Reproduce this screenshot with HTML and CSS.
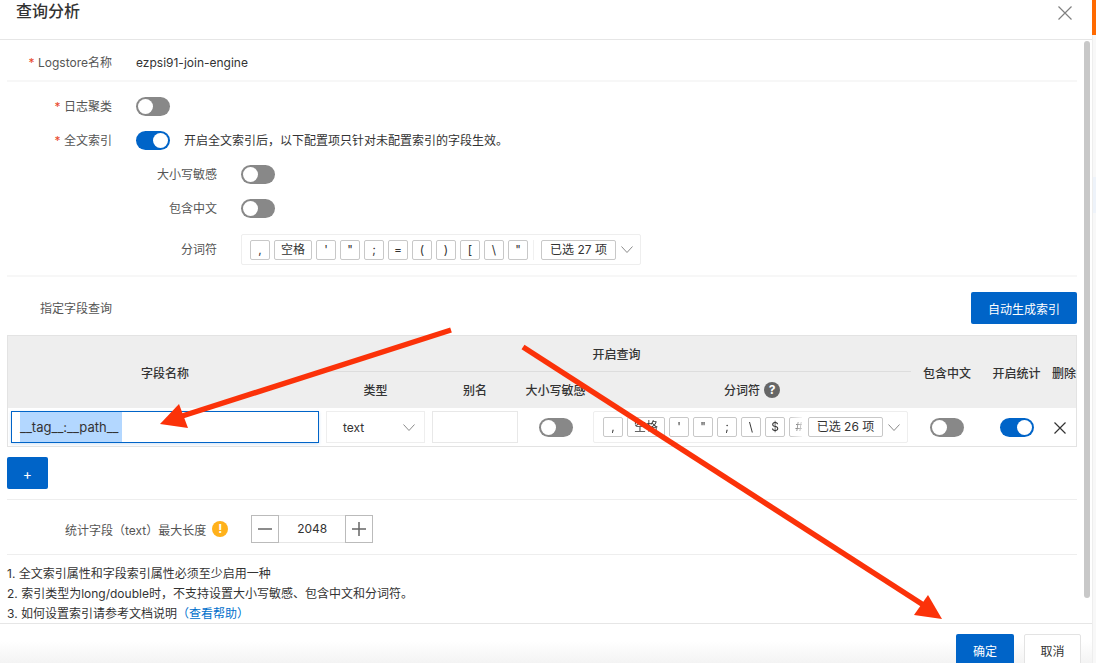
FILE: index.html
```html
<!DOCTYPE html>
<html lang="zh-CN">
<head>
    <meta charset="UTF-8">
    <title>查询分析</title>
    <link rel="stylesheet" href="styles.css">
</head>
<body>
    <div class="dialog">
        <div class="dialog-header">
            <h2>查询分析</h2>
            <svg class="close-icon" width="16" height="16" viewBox="0 0 16 16"><path d="M1.5 1.5l13 13M14.5 1.5l-13 13"/></svg>
        </div>

        <div class="dialog-body">
            <div class="form-row logstore-row">
                <label class="form-label"><span class="req">*</span> Logstore名称</label>
                <span class="form-value">ezpsi91-join-engine</span>
            </div>

            <div class="index-section">
                <div class="form-row">
                    <label class="form-label"><span class="req">*</span> 日志聚类</label>
                    <span class="switch"></span>
                </div>
                <div class="form-row">
                    <label class="form-label"><span class="req">*</span> 全文索引</label>
                    <span class="switch on"></span>
                    <span class="hint">开启全文索引后，以下配置项只针对未配置索引的字段生效。</span>
                </div>
                <div class="form-row sub-row">
                    <label class="form-label">大小写敏感</label>
                    <span class="switch"></span>
                </div>
                <div class="form-row sub-row">
                    <label class="form-label">包含中文</label>
                    <span class="switch"></span>
                </div>
                <div class="form-row sub-row token-row">
                    <label class="form-label">分词符</label>
                    <div class="token-box top-box">
                        <div class="token-list">
                            <span class="token">,</span>
                            <span class="token wide">空格</span>
                            <span class="token">'</span>
                            <span class="token">"</span>
                            <span class="token">;</span>
                            <span class="token">=</span>
                            <span class="token">(</span>
                            <span class="token">)</span>
                            <span class="token">[</span>
                            <span class="token">\</span>
                            <span class="token">"</span>
                        </div>
                        <span class="token-sep"></span>
                        <span class="token count">已选 27 项</span>
                        <svg class="chevron" width="12" height="7" viewBox="0 0 12 7"><path d="M.5.5L6 6.5 11.5.5"/></svg>
                    </div>
                </div>
            </div>

            <div class="form-row field-row">
                <label class="form-label">指定字段查询</label>
                <button class="btn primary auto-btn">自动生成索引</button>
            </div>

            <div class="table-wrap">
                <table class="field-table">
                    <colgroup>
                        <col class="c-name"><col class="c-type"><col class="c-alias"><col class="c-case">
                        <col class="c-token"><col class="c-cn"><col class="c-stat"><col class="c-del">
                    </colgroup>
                    <thead>
                        <tr>
                            <th rowspan="2">字段名称</th>
                            <th colspan="4" class="group-head">开启查询</th>
                            <th rowspan="2">包含中文</th>
                            <th rowspan="2">开启统计</th>
                            <th rowspan="2" class="del-head">删除</th>
                        </tr>
                        <tr>
                            <th>类型</th>
                            <th>别名</th>
                            <th>大小写敏感</th>
                            <th>
                                <span class="th-help">分词符
                                    <span class="help-icon">?</span>
                                </span>
                            </th>
                        </tr>
                    </thead>
                    <tbody>
                        <tr>
                            <td>
                                <div class="field-input"><span class="selected">__tag__:__path__</span></div>
                            </td>
                            <td>
                                <div class="select-box">
                                    <span>text</span>
                                    <svg class="chevron" width="12" height="7" viewBox="0 0 12 7"><path d="M.5.5L6 6.5 11.5.5"/></svg>
                                </div>
                            </td>
                            <td><div class="alias-input"></div></td>
                            <td class="center"><span class="switch"></span></td>
                            <td>
                                <div class="token-box row-box">
                                    <div class="token-list clipped">
                                        <span class="token">,</span>
                                        <span class="token wide">空格</span>
                                        <span class="token">'</span>
                                        <span class="token">"</span>
                                        <span class="token">;</span>
                                        <span class="token">\</span>
                                        <span class="token">$</span>
                                        <span class="token">#</span>
                                    </div>
                                    <span class="token count">已选 26 项</span>
                                    <svg class="chevron" width="12" height="7" viewBox="0 0 12 7"><path d="M.5.5L6 6.5 11.5.5"/></svg>
                                </div>
                            </td>
                            <td class="center"><span class="switch"></span></td>
                            <td class="center"><span class="switch on"></span></td>
                            <td class="center">
                                <svg class="del-icon" width="14" height="14" viewBox="0 0 14 14"><path d="M1.5 1.5l11 11M12.5 1.5l-11 11"/></svg>
                            </td>
                        </tr>
                    </tbody>
                </table>
            </div>

            <button class="btn primary add-btn">+</button>

            <div class="stat-row">
                <label class="stat-label">统计字段（text）最大长度</label>
                <span class="warn-icon">!</span>
                <div class="number-box">
                    <span class="num-btn">
                        <svg width="14" height="14" viewBox="0 0 14 14"><path d="M0 7h14"/></svg>
                    </span>
                    <span class="num-value">2048</span>
                    <span class="num-btn">
                        <svg width="14" height="14" viewBox="0 0 14 14"><path d="M0 7h14M7 0v14"/></svg>
                    </span>
                </div>
            </div>

            <div class="notes">
                <p>1. 全文索引属性和字段索引属性必须至少启用一种</p>
                <p>2. 索引类型为long/double时，不支持设置大小写敏感、包含中文和分词符。</p>
                <p>3. 如何设置索引请参考文档说明<a href="#">（查看帮助）</a></p>
            </div>

            <div class="scroll-thumb"></div>
        </div>

        <div class="dialog-footer">
            <button class="btn primary footer-btn">确定</button>
            <button class="btn normal footer-btn">取消</button>
        </div>
    </div>

    <div class="page-edge">
        <div class="edge-orange"></div>
        <div class="edge-blue"></div>
    </div>

    <!-- 红色标注箭头 -->
    <svg class="arrows" width="1096" height="663" viewBox="0 0 1096 663">
        <line x1="451" y1="330" x2="176" y2="418"/>
        <polygon points="160,424 179,404 188,428"/>
        <line x1="523" y1="347" x2="925" y2="606"/>
        <polygon points="942,619 928,595 914,615"/>
    </svg>
</body>
</html>
```

FILE: styles.css
```css
* {
    box-sizing: border-box;
}

html, body {
    height: 100%;
}

body {
    margin: 0;
    display: flex;
    overflow: hidden;
    background: #fff;
    font-family: Inter, "Noto Sans CJK SC", sans-serif;
    font-size: 12px;
    color: #333;
}

.dialog {
    width: 1092px;
    height: 663px;
    flex: none;
    display: flex;
    flex-direction: column;
    overflow: hidden;
    background: #fff;
}

.dialog-header {
    height: 40px;
    flex: none;
    display: flex;
    justify-content: space-between;
    padding: 0 19px 14px 16px;
    align-items: center;
    border-bottom: 1px solid #e6e6e6;
}

.dialog-header h2 {
    margin: 0 0 3px;
    font-size: 16px;
    line-height: 26px;
    font-weight: 500;
    color: #333;
}

.close-icon path {
    fill: none;
    stroke: #808080;
    stroke-width: 1.2;
}

.dialog-body {
    position: relative;
    height: 584px;
    flex: none;
    padding: 0 15px 0 7px;
    border-bottom: 1px solid #e6e6e6;
}

.form-row {
    display: flex;
    align-items: center;
    height: 34px;
}

.form-label {
    width: 105px;
    flex: none;
    margin-right: 24px;
    padding-bottom: 2px;
    text-align: right;
    color: #555;
}

.req {
    color: #e8472a;
}

.logstore-row {
    height: 42px;
    padding-top: 4px;
    border-bottom: 2px solid #f7f7f7;
}

.form-value {
    color: #333;
}

.index-section {
    padding-top: 7px;
    padding-bottom: 10px;
    border-bottom: 2px solid #f7f7f7;
}

.sub-row .form-label {
    width: 210px;
}

.hint {
    margin-left: 14px;
    padding-bottom: 2px;
}

.switch {
    display: inline-block;
    position: relative;
    width: 34px;
    height: 19px;
    flex: none;
    border-radius: 10px;
    background: #888;
    vertical-align: middle;
}

.switch::after {
    content: "";
    position: absolute;
    left: 2px;
    top: 2px;
    width: 15px;
    height: 15px;
    border-radius: 50%;
    background: #fff;
}

.switch.on {
    background: #0064c8;
}

.switch.on::after {
    left: 17px;
}

.token-row {
    height: 31px;
    margin-top: 9px;
}

.token-box {
    display: flex;
    align-items: center;
    border: 1px solid #eee;
    border-radius: 2px;
    background: #fff;
}

.top-box {
    width: 400px;
    height: 31px;
    padding-left: 8px;
}

.row-box {
    width: 315px;
    height: 32px;
    padding-left: 9px;
}

.token-list {
    display: flex;
    gap: 4px;
    flex: none;
}

.token-list.clipped {
    width: 199px;
    overflow: hidden;
    margin-right: 6px;
    -webkit-mask-image: linear-gradient(to right, #000 187px, rgba(0, 0, 0, 0.2) 199px);
    mask-image: linear-gradient(to right, #000 187px, rgba(0, 0, 0, 0.2) 199px);
}

.token {
    width: 20px;
    height: 20px;
    flex: none;
    display: flex;
    align-items: center;
    justify-content: center;
    border: 1px solid #c8c8c8;
    border-radius: 2px;
    background: #fff;
    color: #333;
    line-height: 18px;
}

.token.wide {
    width: 38px;
}

.token.count {
    width: 75px;
}

.token-sep {
    width: 1px;
    height: 20px;
    margin: 0 7px 0 5px;
    flex: none;
    background: #f0f0f0;
}

.chevron {
    flex: none;
    margin-left: 5px;
}

.chevron path {
    fill: none;
    stroke: #8a8a8a;
    stroke-width: 1;
}

.field-row {
    height: 58px;
    justify-content: space-between;
    padding-top: 4px;
}

.btn {
    border: 1px solid transparent;
    border-radius: 2px;
    font-family: inherit;
    font-size: 12px;
    padding: 0;
}

.btn.primary {
    background: #0064c8;
    color: #fff;
}

.btn.normal {
    background: #fff;
    color: #333;
    border-color: #e3e3e3;
}

.auto-btn {
    width: 106px;
    height: 32px;
}

.table-wrap {
    width: 1070px;
    height: 112px;
    border: 1px solid #e3e3e3;
}

.field-table {
    width: 1068px;
    table-layout: fixed;
    border-collapse: collapse;
}

.c-name { width: 314px; }
.c-type { width: 107px; }
.c-alias { width: 92px; }
.c-case { width: 69px; }
.c-token { width: 321px; }
.c-cn { width: 72px; }
.c-stat { width: 67px; }
.c-del { width: 26px; }

.field-table th {
    height: 37px;
    padding: 0;
    background: #eee;
    font-weight: 500;
    color: #333;
    text-align: center;
    white-space: nowrap;
}

.field-table .group-head {
    height: 35px;
    border-bottom: 1px solid #ddd;
}

.field-table .del-head {
    text-align: right;
}

.field-table td {
    height: 38px;
    padding: 3px;
}

.field-table td.center {
    text-align: center;
}

.th-help {
    display: inline-flex;
    align-items: center;
    gap: 4px;
    margin-left: 3px;
}

.help-icon {
    width: 16px;
    height: 16px;
    border-radius: 50%;
    background: #666;
    color: #fff;
    font-size: 12px;
    font-weight: 700;
    line-height: 16px;
    text-align: center;
}

.field-input {
    height: 32px;
    padding: 0 8px;
    border: 1px solid #0064c8;
    box-shadow: 0 1px 3px rgba(0, 100, 200, 0.2);
    display: flex;
}

.selected {
    width: 102px;
    background: #b3d7ff;
    font-size: 13px;
    line-height: 30px;
    white-space: nowrap;
}

.select-box {
    width: 99px;
    height: 32px;
    margin-left: 1px;
    padding: 0 9px 0 16px;
    display: flex;
    align-items: center;
    justify-content: space-between;
    border: 1px solid #eee;
}

.alias-input {
    width: 86px;
    height: 32px;
    border: 1px solid #e8e8e8;
}

.del-icon path {
    fill: none;
    stroke: #333;
    stroke-width: 1.2;
}

.del-icon {
    vertical-align: middle;
    margin: 2px 6px 0 0;
}

.add-btn {
    display: block;
    width: 41px;
    height: 32px;
    margin-top: 10px;
    font-size: 14px;
}

.stat-row {
    margin-top: 10px;
    height: 56px;
    padding-top: 4px;
    border-top: 1px solid #eee;
    border-bottom: 1px solid #eee;
    display: flex;
    align-items: center;
    padding-left: 58px;
}

.stat-label {
    color: #555;
    white-space: nowrap;
}

.warn-icon {
    width: 16px;
    height: 16px;
    flex: none;
    margin-left: 6px;
    margin-right: 23px;
    border-radius: 50%;
    background: #ffb11b;
    color: #fff;
    font-weight: 700;
    line-height: 16px;
    text-align: center;
}

.number-box {
    display: flex;
    height: 28px;
}

.num-btn {
    width: 28px;
    display: flex;
    align-items: center;
    justify-content: center;
    border: 1px solid #bbb;
}

.num-btn path {
    fill: none;
    stroke: #666;
    stroke-width: 1.5;
}

.num-value {
    width: 66px;
    text-align: center;
    line-height: 26px;
    border-top: 1px solid #e6e6e6;
    border-bottom: 1px solid #e6e6e6;
}

.notes {
    padding-top: 9px;
}

.notes p {
    margin: 0;
    line-height: 20px;
    color: #333;
}

.notes a {
    color: #0070cc;
    text-decoration: none;
}

.scroll-thumb {
    position: absolute;
    right: 2px;
    top: 1px;
    width: 6px;
    height: 557px;
    border-radius: 3px;
    background: #c8c8c8;
}

.dialog-footer {
    flex: 1;
    display: flex;
    justify-content: flex-end;
    gap: 10px;
    padding: 10px 11px 0 0;
    background: linear-gradient(to bottom, #fff 40%, #f2f2f2 100%);
}

.footer-btn {
    width: 58px;
    height: 32px;
    flex: none;
}

.footer-btn.normal {
    width: 57px;
}

.page-edge {
    flex: 1;
    background: #f8f8f8;
    border-left: 1px solid #eee;
}

.edge-orange {
    height: 35px;
    margin-left: -1px;
    background: #ff6a00;
}

.edge-blue {
    height: 36px;
    margin-top: 142px;
    background: #eef3fa;
}

.arrows {
    position: absolute;
    left: 0;
    top: 0;
    pointer-events: none;
}

.arrows line {
    stroke: #fb3209;
    stroke-width: 5.5;
}

.arrows polygon {
    fill: #fb3209;
}
```
